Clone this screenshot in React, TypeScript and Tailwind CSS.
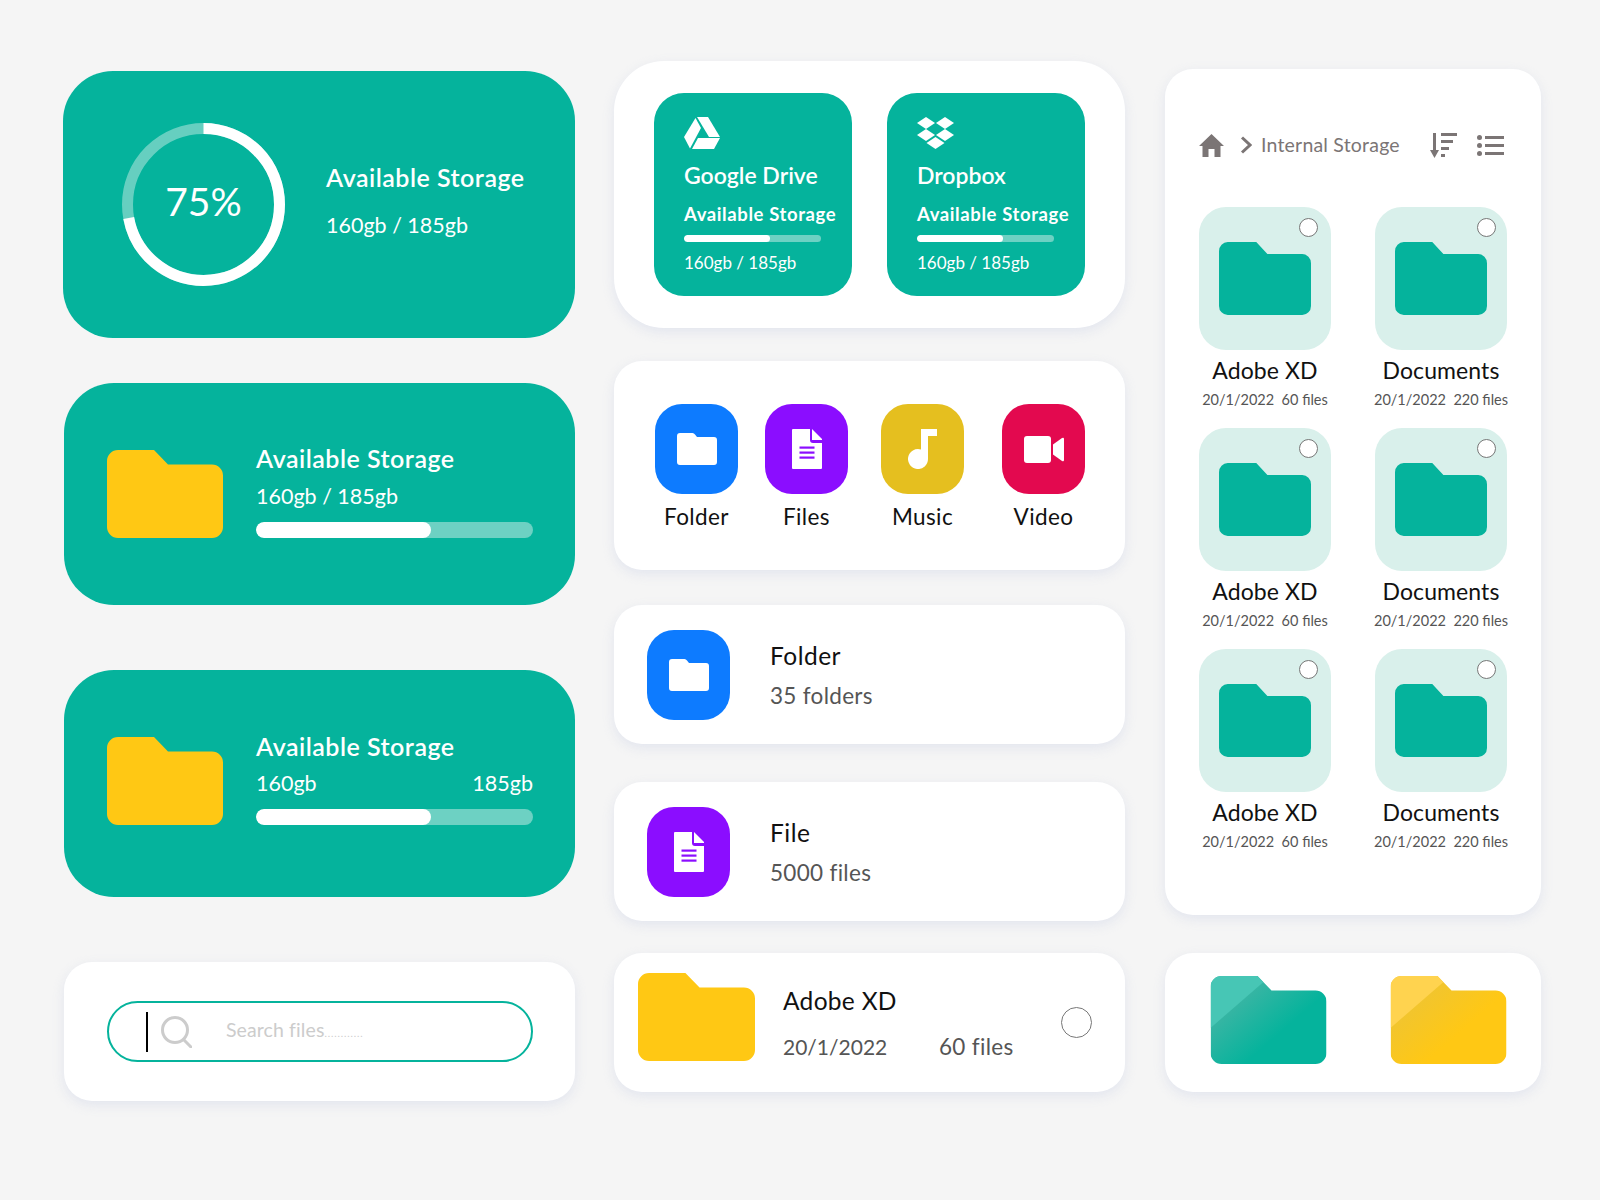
import { ReactNode } from "react";

const cardClass = "bg-white shadow-[0_4px_12px_rgba(205,210,230,0.45)]";

function Folder({ color, className }: { color: string; className: string }) {
  return (
    <svg viewBox="0 0 116 88" preserveAspectRatio="none" className={className}>
      <path
        d="M11 0H47L61 14.5H105a11 11 0 0 1 11 11V77a11 11 0 0 1-11 11H11a11 11 0 0 1-11-11V11a11 11 0 0 1 11-11z"
        fill={color}
      />
    </svg>
  );
}

// folder with the glossy fold, bottom right panel
function GlossFolder({ id, base, shade, light, className }: { id: string; base: string; shade: string; light: string; className: string }) {
  return (
    <svg viewBox="0 0 116 88" className={className}>
      <defs>
        <clipPath id={`${id}-clip`}>
          <path d="M11 0H47L61 14.5H105a11 11 0 0 1 11 11V77a11 11 0 0 1-11 11H11a11 11 0 0 1-11-11V11a11 11 0 0 1 11-11z" />
        </clipPath>
        <linearGradient id={`${id}-grad`} gradientUnits="userSpaceOnUse" x1="27" y1="29" x2="59" y2="66">
          <stop offset="0" stopColor={shade} />
          <stop offset="1" stopColor={base} />
        </linearGradient>
      </defs>
      <g clipPath={`url(#${id}-clip)`}>
        <rect width="116" height="88" fill={`url(#${id}-grad)`} />
        <polygon points="0,0 48,0 53,6 0,52" fill={light} />
      </g>
    </svg>
  );
}

function SmallFolderIcon() {
  return (
    <svg viewBox="0 0 40 32" className="h-[32px] w-[40px]" fill="#fff">
      <path d="M3 0H15.5Q17 0 18 1.5L20 4H37a3 3 0 0 1 3 3V29a3 3 0 0 1-3 3H3a3 3 0 0 1-3-3V3a3 3 0 0 1 3-3z" />
    </svg>
  );
}

function FileIcon({ line }: { line: string }) {
  return (
    <svg viewBox="0 0 30 40" className="h-[40px] w-[30px]">
      <path d="M1 0H18V11Q18 14 21 14H30V39Q30 40 29 40H1Q0 40 0 39V1Q0 0 1 0z" fill="#fff" />
      <path d="M20 0L30 10V11H20z" fill="#fff" />
      <rect x="7.5" y="17.5" width="15" height="2.2" fill={line} />
      <rect x="7.5" y="22.5" width="15" height="2.2" fill={line} />
      <rect x="7.5" y="27.5" width="15" height="2.2" fill={line} />
    </svg>
  );
}

function MusicIcon() {
  return (
    <svg viewBox="0 0 29 40" className="h-[40px] w-[29px]" fill="#fff">
      <path d="M13 0H29V7H20V30A10 10 0 1 1 13 20.5z" />
    </svg>
  );
}

function VideoIcon() {
  return (
    <svg viewBox="0 0 40 27" className="h-[27px] w-[40px]" fill="#fff">
      <rect width="27" height="27" rx="3" />
      <path d="M29 8.5L38 2Q40 1 40 3V24Q40 26 38 25L29 18.500z" />
    </svg>
  );
}

function DriveIcon() {
  return (
    <svg viewBox="0 0 36 32" className="h-[32px] w-[36px]" fill="#fff">
      <polygon points="13,0 24,0 36,20 25,20" />
      <polygon points="11.500,1 17,11 6,31.500 0,20" />
      <polygon points="14,21 36,21 30,32 8,32" />
    </svg>
  );
}

function DropboxIcon() {
  return (
    <svg viewBox="0 0 37 32" className="h-[32px] w-[37px]" fill="#fff">
      <polygon points="0,6 9,0 18,6 9,12" />
      <polygon points="19,6 28,0 37,6 28,12" />
      <polygon points="0,18 9,12 18,18 9,24" />
      <polygon points="19,18 28,12 37,18 28,24" />
      <polygon points="9.500,26 18.500,20 27.500,26 18.500,32" />
    </svg>
  );
}

function Bar({ track, className, fill }: { track: string; className: string; fill: string }) {
  return (
    <div className={`${className} ${track} overflow-hidden rounded-full`}>
      <div className={`${fill} h-full rounded-full bg-white`} />
    </div>
  );
}

function CloudCard({ icon, name }: { icon: ReactNode; name: string }) {
  return (
    <div className="flex h-[203px] w-[198px] flex-col rounded-[30px] bg-[#05b39c] pl-[30px] pt-[24px] text-white">
      <div className="h-[33px]">{icon}</div>
      <div className="mt-[10px] text-[23px] leading-[30px] font-semibold">{name}</div>
      <div className="mt-[12px] text-[18.500px] leading-[24px] font-bold tracking-[0.6px] whitespace-nowrap">Available Storage</div>
      <Bar track="bg-[#6dd1c3]" className="mt-[9px] h-[7px] w-[137px]" fill="w-[63%]" />
      <div className="mt-[9px] text-[17px] leading-[24px]">160gb / 185gb</div>
    </div>
  );
}

function Category({ bg, label, icon, className }: { bg: string; label: string; icon: ReactNode; className?: string }) {
  return (
    <div className={`flex w-[83px] flex-col items-center ${className ?? ""}`}>
      <div className={`flex h-[90px] w-[83px] items-center justify-center rounded-[27px] ${bg}`}>{icon}</div>
      <div className="mt-[8px] text-[22.500px] leading-[30px] tracking-[0.4px] whitespace-nowrap text-[#111]">{label}</div>
    </div>
  );
}

function SummaryRow({ bg, icon, title, sub, className }: { bg: string; icon: ReactNode; title: string; sub: string; className: string }) {
  return (
    <div className={`${cardClass} ${className} flex h-[139px] items-center rounded-[28px] pl-[33px]`}>
      <div className={`flex h-[90px] w-[83px] items-center justify-center rounded-[27px] ${bg}`}>{icon}</div>
      <div className="ml-[40px] pt-[2px]">
        <div className="text-[24.500px] leading-[32px] tracking-[0.5px] text-[#111]">{title}</div>
        <div className="mt-[9px] text-[22.500px] leading-[30px] tracking-[0.3px] text-[#555]">{sub}</div>
      </div>
    </div>
  );
}

function Tile({ name, meta, radioClass }: { name: string; meta: string; radioClass: string }) {
  return (
    <div className="flex w-[132px] flex-col items-center">
      <div className="relative flex h-[143px] w-[132px] items-center justify-center rounded-[27px] bg-[#d9f0eb]">
        <Folder color="#05b39c" className="h-[73px] w-[92px]" />
        <div className={`absolute top-[11px] h-[19px] w-[19px] rounded-full border border-[#777] bg-white ${radioClass}`} />
      </div>
      <div className="mt-[5px] text-[23px] leading-[30px] tracking-[0.1px] whitespace-nowrap text-[#111]">{name}</div>
      <div className="mt-[5px] text-[14.500px] leading-[20px] whitespace-pre text-[#555]">{meta}</div>
    </div>
  );
}

export default function App() {
  return (
    <div className="flex h-[1200px] w-[1600px] bg-[#f5f5f5] pl-[63px] font-['Lato','Liberation_Sans',sans-serif]">
      {/* Left column */}
      <div className="w-[512px]">
        <div className="mt-[71px] flex h-[267px] items-center rounded-[50px] bg-[#05b39c] pl-[59px] text-white">
          <div className="relative h-[163px] w-[163px]">
            <svg viewBox="0 0 163 163" className="h-full w-full -rotate-90">
              <circle cx="81.500" cy="81.500" r="76" fill="none" stroke="#66cfc0" strokeWidth="11" />
              <circle cx="81.500" cy="81.500" r="76" fill="none" stroke="#fff" strokeWidth="11" strokeDasharray="344 478" />
            </svg>
            <div className="absolute inset-0 flex items-center justify-center pb-[6px] text-[39px]">75%</div>
          </div>
          <div className="ml-[41px] pb-[7px]">
            <div className="text-[25px] leading-[32px] font-semibold tracking-[0.5px]">Available Storage</div>
            <div className="mt-[16px] text-[21.500px] leading-[32px]">160gb / 185gb</div>
          </div>
        </div>

        <div className="mt-[45px] ml-px flex h-[222px] w-[511px] items-center rounded-[50px] bg-[#05b39c] pl-[43px] text-white">
          <Folder color="#ffc814" className="h-[88px] w-[116px]" />
          <div className="ml-[33px] w-[277px] pb-[8px]">
            <div className="text-[25px] leading-[32px] font-semibold tracking-[0.5px]">Available Storage</div>
            <div className="mt-[6px] text-[21.500px] leading-[32px]">160gb / 185gb</div>
            <Bar track="bg-[#6dd1c3]" className="mt-[10px] h-[16px] w-[277px]" fill="w-[63%]" />
          </div>
        </div>

        <div className="mt-[65px] ml-px flex h-[227px] w-[511px] items-center rounded-[50px] bg-[#05b39c] pl-[43px] text-white">
          <Folder color="#ffc814" className="mb-[6px] h-[88px] w-[116px]" />
          <div className="ml-[33px] w-[277px] pb-[12px]">
            <div className="text-[25px] leading-[32px] font-semibold tracking-[0.5px]">Available Storage</div>
            <div className="mt-[5px] flex justify-between text-[21.500px] leading-[32px]">
              <span>160gb</span>
              <span>185gb</span>
            </div>
            <Bar track="bg-[#6dd1c3]" className="mt-[10px] h-[16px] w-[277px]" fill="w-[63%]" />
          </div>
        </div>

        <div className={`${cardClass} mt-[65px] ml-px flex h-[139px] w-[511px] items-center rounded-[28px] pl-[43px]`}>
          <div className="flex h-[61px] w-[426px] items-center rounded-full border-2 border-[#05b39c] pl-[37px]">
            <div className="h-[40px] w-[2px] bg-black" />
            <svg viewBox="0 0 31 32" className="ml-[13px] h-[32px] w-[31px]" fill="none" stroke="#ccc" strokeWidth="3">
              <circle cx="14" cy="14" r="12.500" />
              <path d="M23 24L30 31" strokeLinecap="round" />
            </svg>
            <div className="ml-[34px] text-[19.500px] leading-[24px] tracking-[0.1px] whitespace-nowrap text-[#ccc]">
              Search files<span className="text-[10px] tracking-[0.9px]">............</span>
            </div>
          </div>
        </div>
      </div>

      {/* Middle column */}
      <div className="ml-[39px] w-[511px]">
        <div className={`${cardClass} mt-[61px] flex h-[267px] items-center gap-[35px] rounded-[50px] pl-[40px]`}>
          <CloudCard icon={<DriveIcon />} name="Google Drive" />
          <CloudCard icon={<DropboxIcon />} name="Dropbox" />
        </div>

        <div className={`${cardClass} mt-[33px] flex h-[209px] items-start rounded-[28px] pl-[41px] pt-[43px]`}>
          <Category bg="bg-[#0d7bff]" label="Folder" icon={<SmallFolderIcon />} />
          <Category bg="bg-[#8b0dff]" label="Files" icon={<FileIcon line="#8b0dff" />} className="ml-[27px]" />
          <Category bg="bg-[#e5bf1f]" label="Music" icon={<MusicIcon />} className="ml-[33px]" />
          <Category bg="bg-[#e3094f]" label="Video" icon={<VideoIcon />} className="ml-[38px]" />
        </div>

        <SummaryRow bg="bg-[#0d7bff]" icon={<SmallFolderIcon />} title="Folder" sub="35 folders" className="mt-[35px]" />
        <SummaryRow bg="bg-[#8b0dff]" icon={<FileIcon line="#8b0dff" />} title="File" sub="5000 files" className="mt-[38px]" />

        <div className={`${cardClass} mt-[32px] flex h-[139px] items-center rounded-[28px] pl-[24px]`}>
          <Folder color="#ffc814" className="mb-[12px] h-[88px] w-[117px]" />
          <div className="ml-[28px] w-[262px] pt-[2px]">
            <div className="text-[24.500px] leading-[32px] tracking-[0.3px] text-[#111]">Adobe XD</div>
            <div className="mt-[15px] flex items-baseline leading-[30px] text-[#555]">
              <span className="w-[156px] text-[21px]">20/1/2022</span>
              <span className="text-[22.500px] tracking-[0.3px]">60 files</span>
            </div>
          </div>
          <div className="ml-[16px] h-[31px] w-[31px] rounded-full border border-[#777]" />
        </div>
      </div>

      {/* Right column */}
      <div className="ml-[40px] w-[376px]">
        <div className={`${cardClass} mt-[69px] h-[846px] rounded-[28px] pl-[34px] pt-[64px]`}>
          <div className="flex h-[24px] items-center text-[#7b7575]">
            <svg viewBox="0 0 25 23" className="h-[23px] w-[25px]" fill="currentColor">
              <path d="M12.500 0L25 12H21.500V23H15.500V15H9.500V23H3.500V12H0z" />
            </svg>
            <svg viewBox="0 0 12 18" className="ml-[16px] h-[18px] w-[12px]" fill="none" stroke="currentColor" strokeWidth="3">
              <path d="M2 1.500L10 9L2 16.500" />
            </svg>
            <div className="ml-[9px] text-[19.500px] leading-[24px] tracking-[0.2px] whitespace-nowrap">Internal Storage</div>
            <svg viewBox="0 0 27 25" className="ml-[30px] h-[25px] w-[27px]" fill="currentColor">
              <rect x="3" y="0" width="3" height="20" />
              <polygon points="0,17 9,17 4.500,25" />
              <rect x="11" y="0" width="16" height="3" />
              <rect x="11" y="7" width="12" height="3" />
              <rect x="11" y="14" width="8" height="3" />
              <rect x="11" y="21" width="4" height="3" />
            </svg>
            <svg viewBox="0 0 27 21" className="ml-[20px] h-[21px] w-[27px]" fill="currentColor">
              <circle cx="2.500" cy="2.500" r="2.500" />
              <circle cx="2.500" cy="10.500" r="2.500" />
              <circle cx="2.500" cy="18.500" r="2.500" />
              <rect x="8" y="1" width="19" height="3" />
              <rect x="8" y="9" width="19" height="3" />
              <rect x="8" y="17" width="19" height="3" />
            </svg>
          </div>
          <div className="mt-[50px] grid w-[307px] grid-cols-[132px_132px] gap-x-[44px] gap-y-[18px]">
            <Tile name="Adobe XD" meta="20/1/2022  60 files" radioClass="right-[13px]" />
            <Tile name="Documents" meta="20/1/2022  220 files" radioClass="right-[11px]" />
            <Tile name="Adobe XD" meta="20/1/2022  60 files" radioClass="right-[13px]" />
            <Tile name="Documents" meta="20/1/2022  220 files" radioClass="right-[11px]" />
            <Tile name="Adobe XD" meta="20/1/2022  60 files" radioClass="right-[13px]" />
            <Tile name="Documents" meta="20/1/2022  220 files" radioClass="right-[11px]" />
          </div>
        </div>

        <div className={`${cardClass} mt-[38px] flex h-[139px] items-center rounded-[28px] pl-[45px]`}>
          <GlossFolder id="teal" base="#05b39c" shade="#35b5a3" light="#47c6b5" className="mb-[6px] h-[88px] w-[117px]" />
          <GlossFolder id="amber" base="#ffc814" shade="#f2c52d" light="#ffd34f" className="mb-[6px] ml-[63px] h-[88px] w-[117px]" />
        </div>
      </div>
    </div>
  );
}
